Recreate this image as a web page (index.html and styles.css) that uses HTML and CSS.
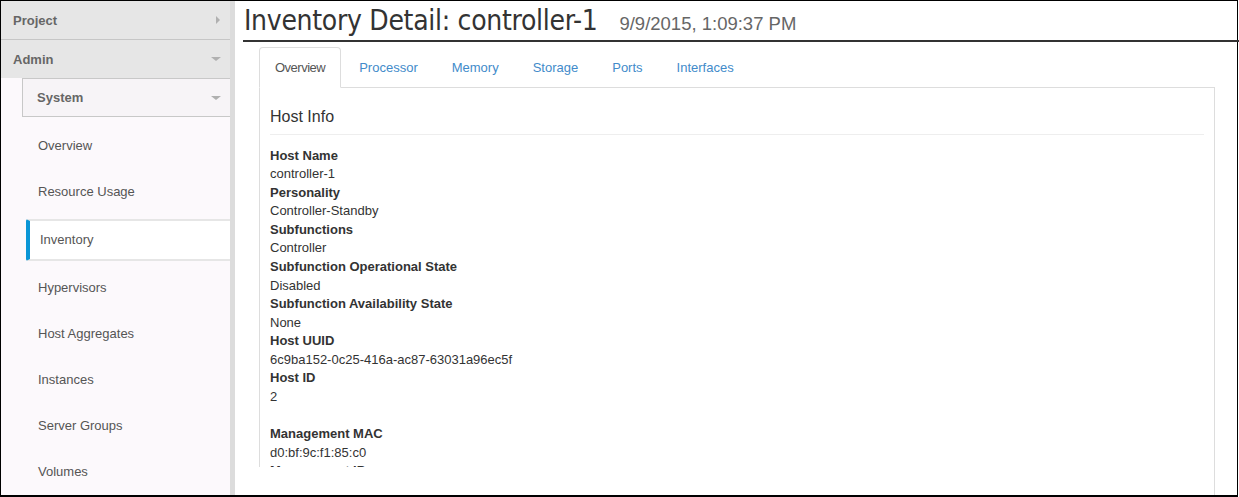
FILE: index.html
```html
<!DOCTYPE html>
<html>
<head>
<meta charset="utf-8">
<link rel="stylesheet" href="styles.css">
</head>
<body>
<div class="frame">
  <nav class="sidebar">
    <div class="dash">Project<span class="caret-right"></span></div>
    <div class="dash">Admin<span class="caret-down"></span></div>
    <div class="panel-head">System<span class="caret-down"></span></div>
    <ul class="nav-list">
      <li>Overview</li>
      <li>Resource Usage</li>
      <li class="active">Inventory</li>
      <li>Hypervisors</li>
      <li>Host Aggregates</li>
      <li>Instances</li>
      <li>Server Groups</li>
      <li>Volumes</li>
    </ul>
  </nav>
  <main class="main">
    <div class="page-header">
      <h1 class="title">Inventory Detail: controller-1</h1>
      <span class="timestamp">9/9/2015, 1:09:37 PM</span>
    </div>
    <div class="detail">
      <ul class="tabs">
        <li class="active"><a class="tab-first">Overview</a></li>
        <li><a>Processor</a></li>
        <li><a>Memory</a></li>
        <li><a>Storage</a></li>
        <li><a>Ports</a></li>
        <li><a>Interfaces</a></li>
      </ul>
      <div class="tab-content">
        <div class="pane">
          <h3 class="section-title">Host Info</h3>
          <hr class="rule">
          <dl class="info">
            <dt>Host Name</dt><dd>controller-1</dd>
            <dt>Personality</dt><dd>Controller-Standby</dd>
            <dt>Subfunctions</dt><dd>Controller</dd>
            <dt>Subfunction Operational State</dt><dd>Disabled</dd>
            <dt>Subfunction Availability State</dt><dd>None</dd>
            <dt>Host UUID</dt><dd>6c9ba152-0c25-416a-ac87-63031a96ec5f</dd>
            <dt>Host ID</dt><dd>2</dd>
            <dd class="blank">&nbsp;</dd>
            <dt>Management MAC</dt><dd>d0:bf:9c:f1:85:c0</dd>
            <dt>Management IP</dt><dd>192.168.204.4</dd>
          </dl>
        </div>
      </div>
    </div>
  </main>
</div>
</body>
</html>
```
FILE: styles.css
```css
* { box-sizing: border-box; }
html, body { margin: 0; padding: 0; background: #fff; }
body { font-family: "Liberation Sans", Arial, sans-serif; font-size: 13px; color: #333; }

.frame {
  width: 1238px;
  height: 497px;
  border-left: 1px solid #000;
  border-top: 1px solid #000;
  border-right: 1px solid #000;
  border-bottom: 2px solid #000;
  display: flex;
  overflow: visible;
}

/* Sidebar */
.sidebar {
  width: 234px;
  flex: none;
  background: #fcf9fc;
  border-right: 5px solid #dcdcdc;
  overflow: hidden;
}
.dash {
  height: 38px;
  background: #e6e6e6;
  display: flex;
  align-items: center;
  justify-content: space-between;
  padding: 0 9px 0 12px;
  font-weight: bold;
  font-size: 13px;
  color: #666;
}
.dash:first-child { height: 39px; border-bottom: 1px solid #c6c6c6; }
.panel-head {
  margin-left: 21px;
  height: 39px;
  background: #f7f4f7;
  border: 1px solid #c8c8c8;
  border-right: none;
  display: flex;
  align-items: center;
  justify-content: space-between;
  padding: 0 9px 0 14px;
  font-weight: bold;
  font-size: 13px;
  color: #666;
}
.caret-right {
  width: 0; height: 0;
  border-top: 4px solid transparent;
  border-bottom: 4px solid transparent;
  border-left: 4px solid #b0b0b0;
  margin-right: 1px;
}
.caret-down {
  width: 0; height: 0;
  border-left: 5px solid transparent;
  border-right: 5px solid transparent;
  border-top: 4px solid #b0b0b0;
}
.nav-list {
  list-style: none;
  margin: 0;
  padding: 6px 0 0 0;
}
.nav-list li {
  height: 46px;
  line-height: 46px;
  padding-left: 37px;
  color: #555;
  font-size: 13px;
}
.nav-list li.active {
  height: 42px;
  line-height: 38px;
  margin: 4px 0 4px 25px;
  padding-left: 10px;
  background: #fff;
  border-top: 2px solid #e6e6e6;
  border-bottom: 2px solid #e6e6e6;
  border-left: 4px solid #0a96d6;
  border-radius: 2px 0 0 2px;
}

/* Main */
.main {
  flex: 1;
  min-width: 0;
  display: flex;
  flex-direction: column;
}
.page-header {
  margin-left: 8px;
  margin-right: -3px;
  height: 41px;
  border-bottom: 2px solid #333;
  display: flex;
  align-items: baseline;
  position: relative;
}
.title {
  margin: 0;
  font-family: "Liberation Sans Narrow", "DejaVu Sans Condensed", sans-serif;
  font-weight: normal;
  font-size: 28px;
  letter-spacing: -0.3px;
  line-height: 39px;
  color: #333;
  padding-left: 1px;
}
.timestamp {
  margin-left: 22px;
  font-size: 18.5px;
  color: #666;
}

.detail {
  margin: 5px 22px 0 24px;
  flex: 1;
  display: flex;
  flex-direction: column;
  min-height: 0;
}
.tabs {
  list-style: none;
  margin: 0;
  padding: 0;
  display: flex;
  border-bottom: 1px solid #ddd;
}
.tabs li { margin-bottom: -1px; }
.tabs a {
  display: block;
  padding: 11px 15px 9px 15px;
  margin-right: 2px;
  line-height: 18.57px;
  border: 1px solid transparent;
  border-radius: 4px 4px 0 0;
  color: #428bca;
  font-size: 13px;
}
.tabs a.tab-first { letter-spacing: -0.5px; }
.tabs li.active a {
  color: #555;
  background: #fff;
  border-color: #ddd #ddd transparent #ddd;
}
.tab-content {
  flex: 1;
  border-right: 1px solid #ddd;
}
.pane {
  height: 379px;
  overflow: hidden;
  border-left: 1px solid #ddd;
  padding: 10px 10px 0 10px;
}
.section-title {
  margin: 10px 0 0 0;
  font-size: 16px;
  line-height: 18px;
  font-weight: normal;
  color: #333;
}
.rule {
  margin: 8px 0 12px 0;
  border: 0;
  border-top: 1px solid #eee;
}
.info {
  margin: 0;
  line-height: 18.57px;
  font-size: 13px;
}
.info dt { font-weight: bold; color: #333; }
.info dd { margin: 0; color: #333; }
```
